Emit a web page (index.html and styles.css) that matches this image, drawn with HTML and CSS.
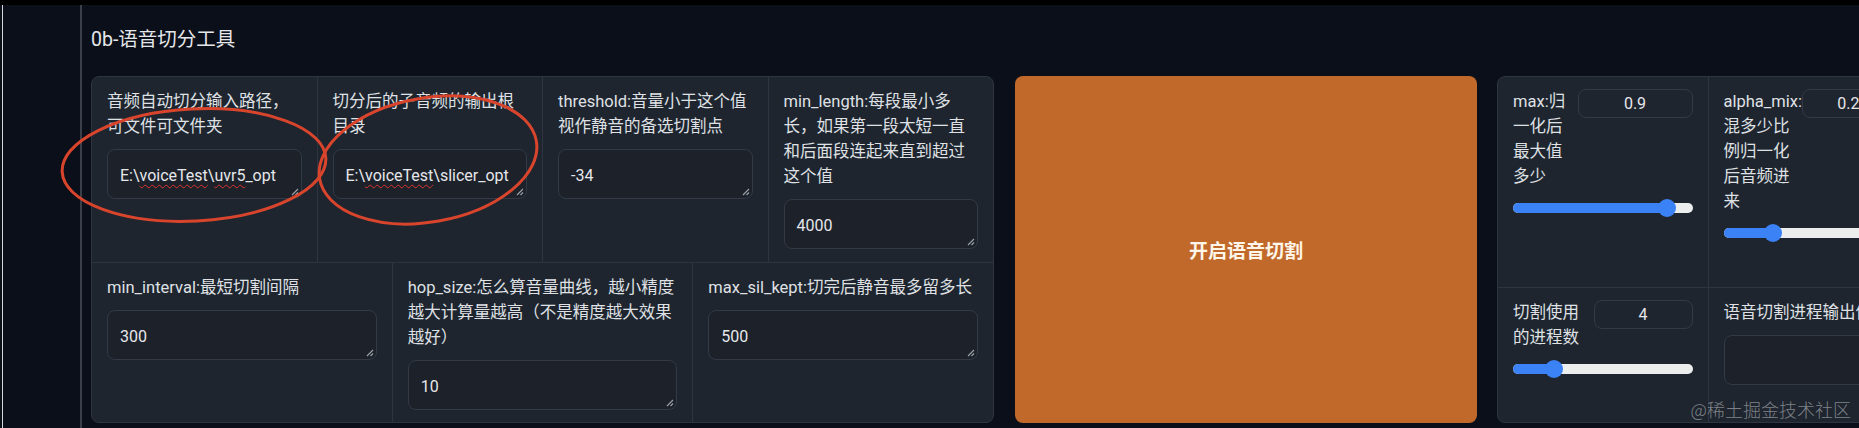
FILE: index.html
```html
<!DOCTYPE html>
<html lang="zh-CN">
<head>
<meta charset="utf-8">
<title>0b-语音切分工具</title>
<link rel="stylesheet" href="styles.css">
</head>
<body>
<div class="stage">
  <div class="topstrip"></div>
  <div class="main">
    <div class="rail"></div>
    <div class="content">
      <h2 class="title">0b-语音切分工具</h2>
      <div class="row">
        <div class="panel params">
          <div class="prow prow4">
            <div class="cell">
              <div class="label">音频自动切分输入路径，可文件可文件夹</div>
              <div class="ta">E:\<span class="sp">voiceTest</span>\<span class="sp">uvr5</span>_opt<svg class="grip" viewBox="0 0 10 10"><path d="M9 3 L3 9 M9 6.5 L6.5 9"/></svg></div>
            </div>
            <div class="cell">
              <div class="label">切分后的子音频的输出根目录</div>
              <div class="ta">E:\<span class="sp">voiceTest</span>\slicer_opt<svg class="grip" viewBox="0 0 10 10"><path d="M9 3 L3 9 M9 6.5 L6.5 9"/></svg></div>
            </div>
            <div class="cell">
              <div class="label">threshold:音量小于这个值视作静音的备选切割点</div>
              <div class="ta">-34<svg class="grip" viewBox="0 0 10 10"><path d="M9 3 L3 9 M9 6.5 L6.5 9"/></svg></div>
            </div>
            <div class="cell">
              <div class="label">min_length:每段最小多长，如果第一段太短一直和后面段连起来直到超过这个值</div>
              <div class="ta">4000<svg class="grip" viewBox="0 0 10 10"><path d="M9 3 L3 9 M9 6.5 L6.5 9"/></svg></div>
            </div>
          </div>
          <div class="prow prow3">
            <div class="cell">
              <div class="label">min_interval:最短切割间隔</div>
              <div class="ta">300<svg class="grip" viewBox="0 0 10 10"><path d="M9 3 L3 9 M9 6.5 L6.5 9"/></svg></div>
            </div>
            <div class="cell">
              <div class="label">hop_size:怎么算音量曲线，越小精度越大计算量越高（不是精度越大效果越好）</div>
              <div class="ta">10<svg class="grip" viewBox="0 0 10 10"><path d="M9 3 L3 9 M9 6.5 L6.5 9"/></svg></div>
            </div>
            <div class="cell">
              <div class="label">max_sil_kept:切完后静音最多留多长</div>
              <div class="ta">500<svg class="grip" viewBox="0 0 10 10"><path d="M9 3 L3 9 M9 6.5 L6.5 9"/></svg></div>
            </div>
          </div>
        </div>

        <button class="run">开启语音切割</button>

        <div class="panel sliders">
          <div class="srow srow1">
            <div class="cell">
              <div class="head">
                <div class="slabel w-max">max:归一化后最大值多少</div>
                <div class="num w115">0.9</div>
              </div>
              <div class="slider"><div class="track"><div class="fill" style="width: calc(9px + 0.9 * (100% - 18px))"></div><div class="thumb" style="left: calc(9px + 0.9 * (100% - 18px))"></div></div></div>
            </div>
            <div class="cell">
              <div class="head">
                <div class="slabel w-alpha">alpha_mix:混多少比例归一化后音频进来</div>
                <div class="num w102">0.25</div>
              </div>
              <div class="slider"><div class="track"><div class="fill" style="width: calc(9px + 0.25 * (100% - 18px))"></div><div class="thumb" style="left: calc(9px + 0.25 * (100% - 18px))"></div></div></div>
            </div>
          </div>
          <div class="srow srow2">
            <div class="cell">
              <div class="head">
                <div class="slabel w-proc">切割使用的进程数</div>
                <div class="num w99">4</div>
              </div>
              <div class="slider"><div class="track"><div class="fill" style="width: calc(9px + 0.2 * (100% - 18px))"></div><div class="thumb" style="left: calc(9px + 0.2 * (100% - 18px))"></div></div></div>
            </div>
            <div class="cell">
              <div class="label nowrap">语音切割进程输出信息</div>
              <div class="ta out"></div>
            </div>
          </div>
        </div>
      </div>
    </div>
  </div>

  <svg class="annot" width="1859" height="428" viewBox="0 0 1859 428">
    <ellipse cx="194" cy="165" rx="132" ry="56" transform="rotate(-3 194 165)"/>
    <ellipse cx="428" cy="160" rx="110" ry="62" transform="rotate(-10 428 160)"/>
  </svg>
  <div class="watermark">@稀土掘金技术社区</div>
</div>
</body>
</html>
```

FILE: styles.css
```css
* { box-sizing: border-box; }

html, body {
  margin: 0;
  padding: 0;
}

body {
  width: 1859px;
  height: 428px;
  overflow: hidden;
  background: #0b0f19;
  font-family: Roboto, "Noto Sans CJK SC", sans-serif;
  color: #e3e5e8;
}

.stage {
  position: relative;
  width: 1859px;
  height: 428px;
  overflow: hidden;
}

.topstrip {
  height: 5px;
  background: #000;
}

.main {
  display: flex;
  height: 423px;
}

.rail {
  flex: 0 0 auto;
  width: 78px;
  margin-left: 2px;
  border-left: 1px solid #d8d8d8;
}

.content {
  flex: 0 0 auto;
  border-left: 2px solid #3a3f48;
  padding-left: 9px;
}

.title {
  margin: 0;
  padding-top: 22px;
  font-size: 19.5px;
  line-height: 26px;
  font-weight: 400;
  color: #e6e7ea;
  margin-bottom: 23px;
}

.row {
  display: flex;
  height: 347px;
}

.panel {
  flex: 0 0 auto;
  height: 347px;
  border: 1px solid #2e3540;
  border-radius: 8px;
  background: #2e3540;
  overflow: hidden;
  display: flex;
  flex-direction: column;
  gap: 1px;
}

.params { width: 903px; }

.prow {
  display: grid;
  gap: 1px;
}
.prow4 { grid-template-columns: repeat(4, 1fr); height: 185px; }
.prow3 { grid-template-columns: repeat(3, 1fr); flex: 1; }

.cell {
  background: #1f252f;
  padding: 12px 15px;
  min-width: 0;
}

.label {
  font-size: 16.5px;
  line-height: 25px;
  color: #dfe1e5;
  margin-bottom: 10px;
}
.nowrap { white-space: nowrap; }

.ta {
  position: relative;
  height: 50px;
  border: 1px solid #333a46;
  border-radius: 8px;
  background: #1c212a;
  padding: 3px 12px 0;
  display: flex;
  align-items: center;
  font-size: 16px;
  color: #e6e7ea;
  white-space: nowrap;
}

.ta.out { width: 180px; }

.sp {
  text-decoration: underline wavy #e0342c;
  text-decoration-thickness: 1px;
  text-underline-offset: 3px;
}

.grip {
  position: absolute;
  right: 2px;
  bottom: 2px;
  width: 10px;
  height: 10px;
  fill: none;
  stroke: #9aa0a8;
  stroke-width: 1.2;
}

.run {
  flex: 0 0 auto;
  width: 462px;
  height: 347px;
  margin: 0 20px 0 21px;
  border: none;
  border-radius: 8px;
  background: #c1692a;
  color: #fff6ea;
  font-family: Roboto, "Noto Sans CJK SC", sans-serif;
  font-size: 19px;
  font-weight: 700;
  padding: 0;
}

.sliders { width: 422px; }

.srow {
  display: grid;
  grid-template-columns: repeat(2, 1fr);
  gap: 1px;
}
.srow1 { height: 210px; }
.srow2 { flex: 1; }

.head {
  display: flex;
  justify-content: space-between;
  align-items: flex-start;
}

.slabel {
  font-size: 16.5px;
  line-height: 25px;
  color: #dfe1e5;
}
.w-max { width: 60px; }
.w-alpha { width: 79px; }
.w-proc { width: 68px; }

.num {
  height: 29px;
  border: 1px solid #333a46;
  border-radius: 8px;
  background: #1f252f;
  font-size: 16px;
  line-height: 27px;
  text-align: center;
  color: #e6e7ea;
  flex: 0 0 auto;
}
.w115 { width: 115px; }
.w102 { width: 102px; }
.w99 { width: 99px; }

.slider {
  height: 18px;
  margin-top: 10px;
  display: flex;
  align-items: center;
}

.track {
  position: relative;
  width: 100%;
  height: 10px;
  border-radius: 5px;
  background: #eceded;
}

.fill {
  height: 100%;
  border-radius: 5px;
  background: #3b82f6;
}

.thumb {
  position: absolute;
  top: -4px;
  width: 18px;
  height: 18px;
  margin-left: -9px;
  border-radius: 50%;
  background: #3b82f6;
}

.annot {
  position: absolute;
  left: 0;
  top: 0;
  pointer-events: none;
}
.annot ellipse {
  fill: none;
  stroke: #d8452c;
  stroke-width: 3;
}

.watermark {
  position: absolute;
  right: 8px;
  bottom: 6px;
  font-family: "Noto Sans CJK SC", sans-serif;
  font-size: 18px;
  font-weight: 300;
  color: rgba(190, 192, 196, 0.6);
}
```
